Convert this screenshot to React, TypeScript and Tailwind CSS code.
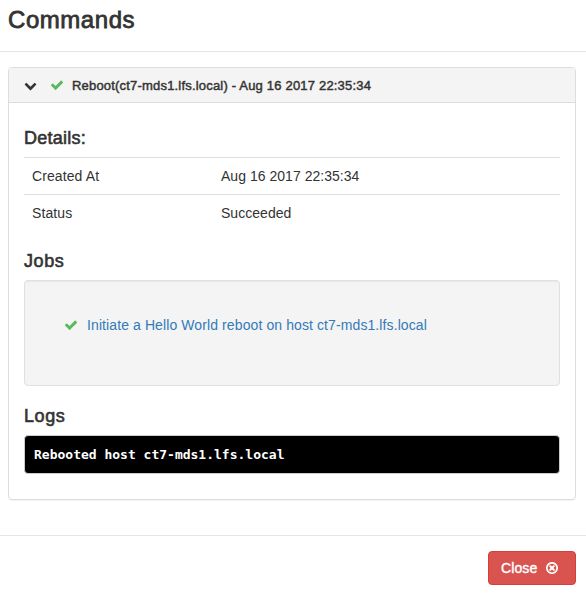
import type { ReactNode } from 'react';

const CHECK =
  'M1671 566q0 40-28 68l-724 724-136 136q-28 28-68 28t-68-28l-136-136-362-362q-28-28-28-68t28-68l136-136q28-28 68-28t68 28l294 295 656-657q28-28 68-28t68 28l136 136q28 28 28 68z';
const CHEVRON_DOWN =
  'M1683 808l-742 741q-19 19-45 19t-45-19l-742-741q-19-19-19-45.5t19-45.5l166-165q19-19 45-19t45 19l531 531 531-531q19-19 45-19t45 19l166 165q19 19 19 45.5t-19 45.5z';
const TIMES_CIRCLE =
  'M1277 1122q0-26-19-45l-181-181 181-181q19-19 19-45 0-27-19-46l-90-90q-19-19-46-19-26 0-45 19l-181 181-181-181q-19-19-45-19-27 0-46 19l-90 90q-19 19-19 46 0 26 19 45l181 181-181 181q-19 19-19 45 0 27 19 46l90 90q19 19 46 19 26 0 45-19l181-181 181 181q19 19 45 19 27 0 46-19l90-90q19-19 19-46zm160-226q0-148-73-273t-198-198-273-73-273 73-198 198-73 273 73 273 198 198 273 73 273-73 198-198 73-273zm227 0q0 209-103 385.5t-279.5 279.5-385.5 103-385.5-103-279.5-279.5-103-385.5 103-385.5 279.5-279.5 385.5-103 385.5 103 279.5 279.5 103 385.5z';

function Icon({ path, className }: { path: string; className: string }) {
  return (
    <svg viewBox="0 0 1792 1792" fill="currentColor" className={`shrink-0 ${className}`} aria-hidden="true">
      <path d={path} />
    </svg>
  );
}

function SectionTitle({ children, className }: { children: ReactNode; className: string }) {
  return (
    <h4 className={`text-[18px] leading-5 [-webkit-text-stroke:0.6px_currentColor] ${className}`}>{children}</h4>
  );
}

function DetailRow({ label, value }: { label: string; value: string }) {
  return (
    <div className="flex h-[37px] items-center border-t border-[#ddd] px-2 text-sm">
      <span className="w-[189px] tracking-[0.1px]">{label}</span>
      <span className="tracking-[0.03px]">{value}</span>
    </div>
  );
}

export default function App() {
  return (
    <div className="h-[598px] w-[586px] overflow-hidden bg-white font-['Liberation_Sans',Arial,sans-serif] text-[#333]">
      <header className="h-[52px] border-b border-[#e5e5e5] pt-[7px] pl-2">
        <h3 className="text-2xl leading-[26px] tracking-[0.55px] [-webkit-text-stroke:0.8px_currentColor]">Commands</h3>
      </header>

      <main className="pt-[15px] pr-[10px] pl-2">
        <section className="h-[433px] rounded border border-[#ddd] shadow-[0_1px_1px_rgba(0,0,0,0.05)]">
          <div className="flex h-[35px] items-center rounded-t-[3px] border-b border-[#ddd] bg-[#f4f4f4] pl-[15px]">
            <Icon path={CHEVRON_DOWN} className="size-[13px]" />
            <Icon path={CHECK} className="ml-[13px] size-[14px] text-[#5cb85c]" />
            <span className="ml-[8px] pt-[2px] text-[13px] tracking-[0.19px] [-webkit-text-stroke:0.45px_currentColor]">
              Reboot(ct7-mds1.lfs.local) - Aug 16 2017 22:35:34
            </span>
          </div>

          <div className="px-[15px] pt-[25px]">
            <SectionTitle className="mb-[9px] tracking-[0.25px]">Details:</SectionTitle>
            <DetailRow label="Created At" value="Aug 16 2017 22:35:34" />
            <DetailRow label="Status" value="Succeeded" />

            <SectionTitle className="mt-5 mb-[9px] tracking-[0.6px]">Jobs</SectionTitle>
            <div className="flex h-[106px] rounded border border-[#e0e0e0] bg-[#f4f4f4] pt-[34px] pl-[39px] shadow-[inset_0_1px_1px_rgba(0,0,0,0.05)]">
              <a className="flex h-5 items-center text-sm tracking-[0.1px] text-[#337ab7]">
                <Icon path={CHECK} className="mr-[9px] size-[14px] text-[#5cb85c]" />
                Initiate a Hello World reboot on host ct7-mds1.lfs.local
              </a>
            </div>

            <SectionTitle className="mt-5 mb-[9px] tracking-[0.6px]">Logs</SectionTitle>
            <pre className="h-[39px] rounded border border-[#ccc] bg-black py-[9px] pl-[9px] font-['DejaVu_Sans_Mono',monospace] text-[13px] leading-[19px] font-bold text-white">
              Rebooted host ct7-mds1.lfs.local
            </pre>
          </div>
        </section>
      </main>

      <footer className="mt-[35px] flex justify-end border-t border-[#e5e5e5] pt-[15px] pr-[10px]">
        <button className="flex h-[34px] w-[88px] items-center rounded border border-[#d43f3a] bg-[#d9534f] pl-3 text-sm tracking-[0.1px] text-white [-webkit-text-stroke:0.4px_currentColor]">
          Close
          <Icon path={TIMES_CIRCLE} className="ml-[8px] size-[14px] [-webkit-text-stroke:0]" />
        </button>
      </footer>
    </div>
  );
}
